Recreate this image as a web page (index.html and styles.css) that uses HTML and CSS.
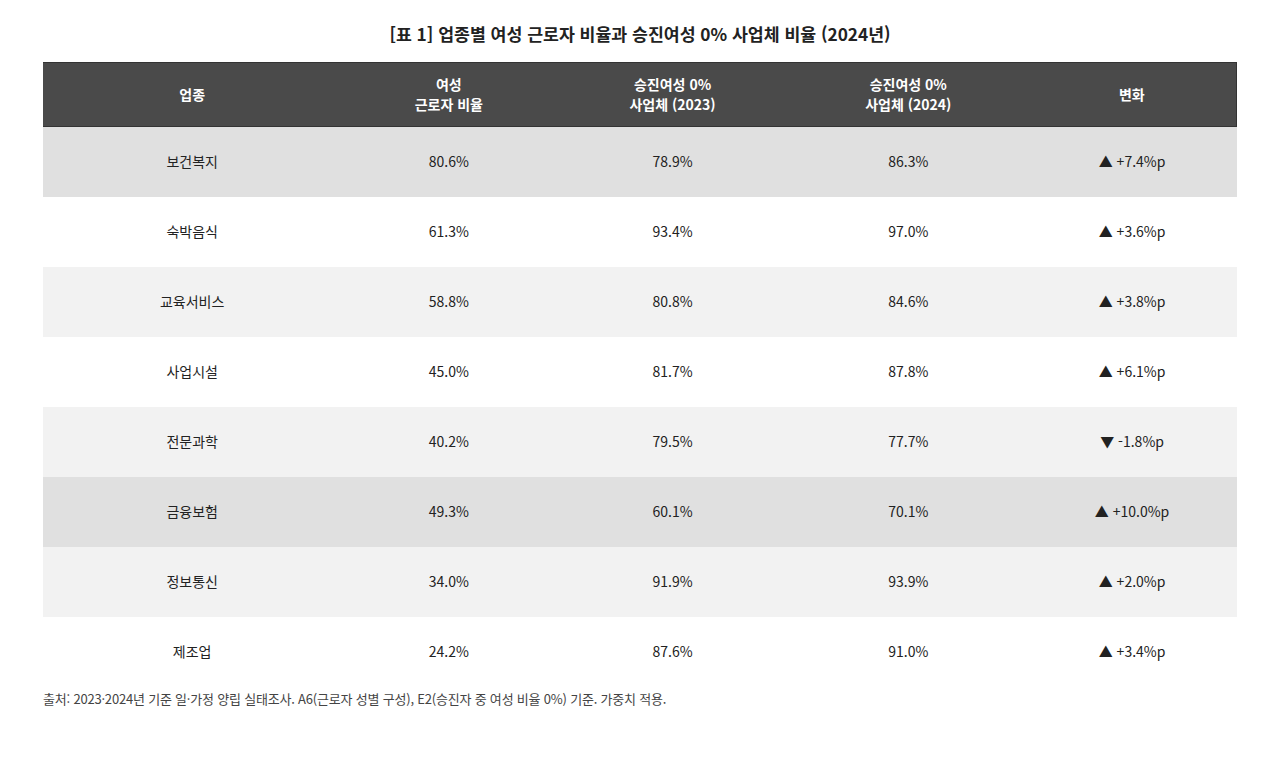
FILE: index.html
```html
<!DOCTYPE html>
<html lang="ko">
<head>
<meta charset="utf-8">
<link rel="stylesheet" href="styles.css">
</head>
<body>
<div class="wrap">
  <h1 class="title">[표 1] 업종별 여성 근로자 비율과 승진여성 0% 사업체 비율 (2024년)</h1>
  <table class="tbl">
    <colgroup>
      <col class="c1"><col class="c2"><col class="c3"><col class="c4"><col class="c5">
    </colgroup>
    <thead>
      <tr>
        <th>업종</th>
        <th>여성<br>근로자 비율</th>
        <th>승진여성 0%<br>사업체 (2023)</th>
        <th>승진여성 0%<br>사업체 (2024)</th>
        <th>변화</th>
      </tr>
    </thead>
    <tbody>
      <tr class="dark"><td>보건복지</td><td>80.6%</td><td>78.9%</td><td>86.3%</td><td>▲ +7.4%p</td></tr>
      <tr class="white"><td>숙박음식</td><td>61.3%</td><td>93.4%</td><td>97.0%</td><td>▲ +3.6%p</td></tr>
      <tr class="light"><td>교육서비스</td><td>58.8%</td><td>80.8%</td><td>84.6%</td><td>▲ +3.8%p</td></tr>
      <tr class="white"><td>사업시설</td><td>45.0%</td><td>81.7%</td><td>87.8%</td><td>▲ +6.1%p</td></tr>
      <tr class="light"><td>전문과학</td><td>40.2%</td><td>79.5%</td><td>77.7%</td><td>▼ -1.8%p</td></tr>
      <tr class="dark"><td>금융보험</td><td>49.3%</td><td>60.1%</td><td>70.1%</td><td>▲ +10.0%p</td></tr>
      <tr class="light"><td>정보통신</td><td>34.0%</td><td>91.9%</td><td>93.9%</td><td>▲ +2.0%p</td></tr>
      <tr class="white"><td>제조업</td><td>24.2%</td><td>87.6%</td><td>91.0%</td><td>▲ +3.4%p</td></tr>
    </tbody>
  </table>
  <p class="note">출처: 2023·2024년 기준 일·가정 양립 실태조사. A6(근로자 성별 구성), E2(승진자 중 여성 비율 0%) 기준. 가중치 적용.</p>
</div>
</body>
</html>
```
FILE: styles.css
```css
html, body {
  margin: 0;
  padding: 0;
  background: #ffffff;
}
body {
  font-family: "Noto Sans CJK KR", "Noto Sans", sans-serif;
  color: #222222;
}
.wrap {
  padding: 21px 43px 0 43px;
}
.title {
  margin: 0 0 15px 0;
  font-size: 17.25px;
  font-weight: 700;
  line-height: 26px;
  text-align: center;
  color: #222222;
}
.tbl {
  width: 1194px;
  border-collapse: collapse;
  table-layout: fixed;
}
.c1 { width: 25%; }
.c2 { width: 18%; }
.c3 { width: 19.5%; }
.c4 { width: 20%; }
.c5 { width: 17.5%; }
.tbl thead th {
  background: #4a4a4a;
  color: #ffffff;
  font-size: 14px;
  font-weight: 700;
  line-height: 20px;
  height: 61px;
  padding: 0 0 2px 0;
  text-align: center;
  vertical-align: middle;
  border-top: 1px solid #333333;
  border-bottom: 1px solid #333333;
}
.tbl thead th:last-child {
  border-right: 1px solid #333333;
}
.tbl tbody td {
  height: 68px;
  padding: 0 0 2px 0;
  font-size: 14px;
  line-height: 20px;
  text-align: center;
  vertical-align: middle;
  color: #222222;
}
.tbl tr.dark td { background: #e0e0e0; }
.tbl tr.light td { background: #f2f2f2; }
.tbl tr.white td { background: #ffffff; }
.note {
  margin: 3px 0 0 0;
  font-size: 13px;
  line-height: 18px;
  color: #444444;
  letter-spacing: -0.2px;
}
```
